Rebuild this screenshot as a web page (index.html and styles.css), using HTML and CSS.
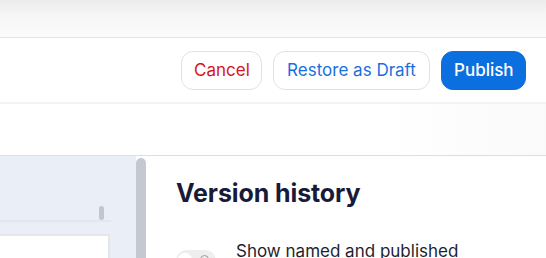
FILE: index.html
```html
<!DOCTYPE html>
<html>
<head>
<meta charset="utf-8">
<link rel="stylesheet" href="styles.css">
</head>
<body>
<div class="topbar"></div>
<div class="toolbar">
  <button class="btn btn-cancel">Cancel</button>
  <button class="btn btn-restore">Restore as Draft</button>
  <button class="btn btn-publish">Publish</button>
</div>
<div class="subbar"></div>
<div class="main">
  <div class="canvas">
    <div class="canvas-top">
      <div class="thumb"></div>
    </div>
    <div class="canvas-line"></div>
    <div class="canvas-box"></div>
  </div>
  <div class="vscroll"></div>
  <div class="panel">
    <h2 class="title">Version history</h2>
    <div class="option">
      <div class="toggle"><span class="knob"></span><span class="ring"></span></div>
      <div class="option-text">Show named and published</div>
    </div>
  </div>
</div>
</body>
</html>
```
FILE: styles.css
```css
* { box-sizing: border-box; }
html, body { margin: 0; padding: 0; }
body {
  width: 546px;
  height: 258px;
  overflow: hidden;
  background: #fff;
  font-family: Inter, "Noto Sans", sans-serif;
  display: flex;
  flex-direction: column;
}
.topbar {
  height: 38px;
  flex: none;
  background: linear-gradient(#ebebeb, #f6f6f6 40%, #fbfbfb);
  border-bottom: 1px solid #e5e5e5;
}
.toolbar {
  height: 66px;
  flex: none;
  display: flex;
  justify-content: flex-end;
  align-items: center;
  gap: 11px;
  padding-right: 20px;
  border-bottom: 2px solid #f3f3f3;
}
.btn {
  height: 39px;
  border-radius: 12px;
  font-family: Inter, "Noto Sans", sans-serif;
  font-size: 17px;
  font-weight: 400;
  padding: 0 12px;
  background: #fff;
  border: 1px solid #e2e2e2;
  cursor: pointer;
}
.btn-cancel { color: #d6141c; width: 81px; }
.btn-restore { color: #1a6fde; width: 157px; }
.btn-publish {
  color: #fff;
  background: #0b6fe0;
  border-color: #0b6fe0;
  font-weight: 500;
  width: 85px;
}
.subbar {
  height: 52px;
  flex: none;
  background: linear-gradient(to right, #fff 70%, #fafafa);
  border-bottom: 1px solid #dedede;
}
.main {
  flex: 1;
  display: flex;
  min-height: 0;
}
.canvas {
  width: 136px;
  flex: none;
  background: #eaeef6;
  display: flex;
  flex-direction: column;
}
.canvas-top {
  height: 64px;
  display: flex;
  align-items: flex-end;
  justify-content: flex-end;
  padding-right: 32px;
}
.thumb {
  width: 5px;
  height: 14px;
  border-radius: 3px;
  background: #c2c6cf;
}
.canvas-line {
  width: 111px;
  height: 2px;
  background: #e2e6ee;
}
.canvas-box {
  margin-top: 12px;
  width: 110px;
  flex: 1;
  background: #fff;
  border: 2px solid #e4e6ea;
  border-left: none;
  border-bottom: none;
}
.vscroll {
  width: 10px;
  flex: none;
  margin-top: 2px;
  background: #c4c8d0;
  border-radius: 5px 5px 0 0;
}
.panel {
  flex: 1;
  padding: 20px 0 0 30px;
}
.title {
  margin: 0;
  font-family: Inter, "Noto Sans", sans-serif;
  font-size: 25px;
  font-weight: 700;
  color: #181a3a;
  letter-spacing: -0.1px;
  line-height: 34px;
}
.option {
  display: flex;
  gap: 20px;
  margin-top: 29px;
  align-items: flex-start;
}
.toggle {
  width: 40px;
  height: 22px;
  border-radius: 11px;
  background: #eeeeee;
  flex: none;
  margin-top: 11px;
  position: relative;
}
.knob {
  position: absolute;
  left: 2px;
  top: 3px;
  width: 14px;
  height: 14px;
  border-radius: 50%;
  background: #fff;
}
.ring {
  position: absolute;
  left: 24px;
  top: 5px;
  width: 9px;
  height: 9px;
  border-radius: 50%;
  border: 1.5px solid #9a9a9a;
}
.option-text {
  font-size: 17px;
  color: #1e1f2e;
  line-height: 24px;
}
```
